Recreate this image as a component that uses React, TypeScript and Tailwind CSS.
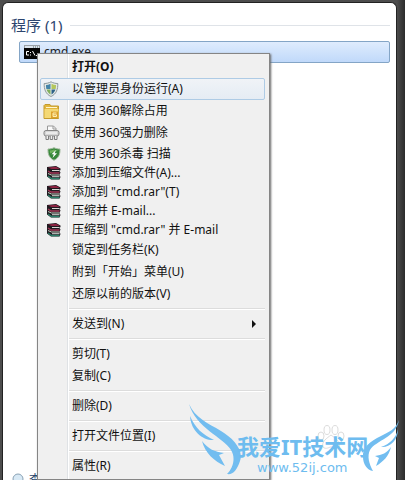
import { Fragment, type ReactNode } from "react";

function UacShield() {
  return (
    <svg width="16" height="16" viewBox="0 0 16 16" aria-hidden="true">
      <path d="M8 .8C6 2 3.500 2.500 1.200 2.500 1 8 2.500 13 8 15.500 13.500 13 15 8 14.800 2.500 12.500 2.500 10 2 8 .8Z" fill="#e4e8e6" stroke="#8b989c" />
      <path d="M7.500 2.800C6 3.600 4.500 4 3 4 2.900 5.500 3 6.700 3.400 8H7.500Z" fill="#4484a8" />
      <path d="M8.500 2.800C10 3.600 11.500 4 13 4 13.100 5.500 13 6.700 12.600 8H8.500Z" fill="#b3c65c" />
      <path d="M3.600 8.600H7.500V13.500C5.500 12.300 4.200 10.700 3.600 8.600Z" fill="#7fae5a" />
      <path d="M12.400 8.600H8.500V13.500C10.500 12.300 11.800 10.700 12.400 8.600Z" fill="#2d6288" />
    </svg>
  );
}

function FolderIcon() {
  return (
    <svg width="17" height="17" viewBox="0 0 17 17" aria-hidden="true">
      <path d="M1 2.500 2 1.500H7L8 3H15.500V15.500H1Z" fill="#e2b63c" stroke="#c39a2c" />
      <path d="M1.500 6H15.500V15H1.500Z" fill="#f4d874" />
      <path d="M3 4.500H14" stroke="#fff6cf" />
      <path d="M8 8.500H15V15H8Z" fill="#dda12c" />
      <path d="M13.500 10H10V13.500H13.500V11.800H10" fill="none" stroke="#fff0b0" />
    </svg>
  );
}

function ShredderIcon() {
  return (
    <svg width="17" height="16" viewBox="0 0 17 16" aria-hidden="true">
      <path d="M4.500 6V1H10.500L13 3.500V6" fill="#fafafa" stroke="#999" />
      <path d="M10 1V4H13" fill="none" stroke="#999" />
      <rect x="1" y="5.500" width="15" height="5.500" rx="2" fill="#d6d6d6" stroke="#858585" />
      <path d="M3 8H14" stroke="#fff" />
      <path d="M3 11V14.500H5.500V11M7.200 11V14.500H9.700V11M11.500 11V14.500H14V11" fill="#eee" stroke="#7d7d7d" />
    </svg>
  );
}

function GreenShield() {
  return (
    <svg width="14" height="14" viewBox="0 0 14 14" aria-hidden="true">
      <path d="M7 .7C5 1.700 3 2 1 2 .8 7 2.200 11 7 13.300 11.800 11 13.200 7 13 2 11 2 9 1.700 7 .7Z" fill="#37873a" stroke="#a0b99c" />
      <path d="M7 2.500C5.500 3.200 4 3.400 2.700 3.400L3 6.500 11 3.500C9.500 3.400 8.200 3 7 2.500Z" fill="#6fb15d" />
      <path d="M9 3 4.500 7.300H6.800L5.500 11 10 6.300H7.600Z" fill="#fff" />
    </svg>
  );
}

function RarIcon() {
  return (
    <svg width="14" height="14" viewBox="0 0 14 14" aria-hidden="true">
      <path d="M0 1 9 0 13.500 2.500V4L12.500 5 13.500 6.500 12.500 9 13.500 11 12.500 13.500H4L0 10.500Z" fill="#1f1a20" />
      <path d="M1 1.500 9 .7 13 3H4.500Z" fill="#8d2342" />
      <path d="M1 5 4 7H12.500" fill="none" stroke="#a33655" strokeWidth="1.400" />
      <path d="M5 4.500H12.500" stroke="#d6d5d2" />
      <path d="M1 7.500 4.500 9H12.500" fill="none" stroke="#c2cfbf" />
      <path d="M1 10 4.500 12.500H12.500" fill="none" stroke="#2a8068" strokeWidth="1.300" />
      <path d="M5 10.700H12.500" stroke="#d6d5d2" />
    </svg>
  );
}

function CmdIcon() {
  return (
    <svg width="16" height="14" viewBox="0 0 16 14" aria-hidden="true">
      <rect width="16" height="14" fill="#9aa0a6" />
      <rect x="1" y="1" width="14" height="2" fill="#dce5ee" />
      <path d="M9 2H10M11 2H12M13 2H14" stroke="#566" />
      <rect y="3" width="16" height="11" fill="#050505" />
      <path d="M5 6.500H2.500V10H5M6.500 7V8M6.500 9.500V10.500M8.500 6 11 10.500M12 10.500H15" fill="none" stroke="#fff" />
    </svg>
  );
}

type Item = { label: string; icon?: ReactNode; bold?: boolean; active?: boolean; compact?: boolean; submenu?: boolean };

const groups: Item[][] = [
  [
    { label: "打开(O)", bold: true },
    { label: "以管理员身份运行(A)", icon: <UacShield />, active: true },
    { label: "使用 360解除占用", icon: <FolderIcon /> },
    { label: "使用 360强力删除", icon: <ShredderIcon /> },
    { label: "使用 360杀毒 扫描", icon: <GreenShield />, compact: true },
    { label: "添加到压缩文件(A)...", icon: <RarIcon />, compact: true },
    { label: '添加到 "cmd.rar"(T)', icon: <RarIcon />, compact: true },
    { label: "压缩并 E-mail...", icon: <RarIcon />, compact: true },
    { label: '压缩到 "cmd.rar" 并 E-mail', icon: <RarIcon />, compact: true },
    { label: "锁定到任务栏(K)" },
    { label: "附到「开始」菜单(U)" },
    { label: "还原以前的版本(V)" },
  ],
  [{ label: "发送到(N)", submenu: true }],
  [{ label: "剪切(T)" }, { label: "复制(C)" }],
  [{ label: "删除(D)" }],
  [{ label: "打开文件位置(I)" }],
  [{ label: "属性(R)" }],
];

function MenuItem({ label, icon, bold, active, compact, submenu }: Item) {
  return (
    <button
      type="button"
      role="menuitem"
      className={`relative flex w-full items-center rounded-xs border text-left ${compact ? "h-[19px]" : "h-[22px]"} ${
        active ? "border-[#aecbe5] bg-linear-to-b from-[#f0f3f7] to-[#e5ecf4]" : "border-transparent"
      } ${bold ? "font-bold" : ""}`}
    >
      <span className={`flex w-[31px] shrink-0 items-center ${compact ? "pl-1.5" : "pl-0.5"}`}>{icon}</span>
      <span className="grow whitespace-nowrap">{label}</span>
      {submenu && (
        <svg width="4" height="8" viewBox="0 0 4 8" className="mr-2" aria-hidden="true">
          <path d="M0 0 4 4 0 8Z" fill="#111" />
        </svg>
      )}
    </button>
  );
}

function ContextMenu() {
  return (
    <div
      role="menu"
      className="absolute top-[53px] left-[37px] w-[233px] border border-[#858585] bg-[#f0f0f0] py-0.5 pr-1 pl-0.5 text-[12px] leading-4 text-[#111] shadow-[1px_1px_2px_#666]"
    >
      <div className="absolute inset-y-0 left-[29px] w-0.5 border-l border-[#dfe2e5] bg-white" />
      {groups.map((group, i) => (
        <Fragment key={i}>
          {i > 0 && (
            <div role="separator" className="ml-7 flex h-2 items-center">
              <div className="h-0.5 w-full border-t border-[#dcdcdc] bg-white" />
            </div>
          )}
          {group.map((item) => (
            <MenuItem key={item.label} {...item} />
          ))}
        </Fragment>
      ))}
    </div>
  );
}

function LeftWing() {
  return (
    <svg width="52" height="72" viewBox="0 0 52 72" className="shrink-0" aria-hidden="true">
      <g fill="#72bdf0">
        <path d="M0 0C6 14 19 19 32 27 44 34 55 46 51 57 48 66 44 71 38 70 44 64 47 54 42 46 34 33 7 24 0 0Z" />
        <path d="M1 12C6 24 14 31 25 36 15 37 2 28 1 12Z" />
        <path d="M13 37C19 45 26 48 35 49L30 51 36 62C25 57 16 49 13 37Z" />
      </g>
    </svg>
  );
}

function RightWing() {
  return (
    <svg width="38" height="52" viewBox="0 0 38 52" className="shrink-0" aria-hidden="true">
      <g fill="#72bdf0">
        <path d="M37 0C34 9 27 12 19 16 8 21 0 28 1 37 1 44 5 50 11 51 7 44 5 36 8 30 14 20 34 18 37 0Z" />
        <path d="M36 9C34 18 28 24 19 27 27 28 36 21 36 9Z" />
        <path d="M29 27C25 33 20 35 13 36L17 38 14 46C21 42 27 36 29 27Z" />
      </g>
    </svg>
  );
}

function Watermark() {
  return (
    <div className="pointer-events-none absolute top-[404px] left-[189px] flex text-[#6ebcef]">
      <LeftWing />
      <div className="-ml-1 pt-[26px] whitespace-nowrap">
        <p className="text-[22px] leading-8 font-bold">我爱IT技术网</p>
        <p className="-mt-0.5 pl-5 font-['DejaVu_Sans'] text-[13px] leading-4 font-medium">www.52ij.com</p>
      </div>
      <div className="-ml-1.5 pt-4">
        <RightWing />
      </div>
    </div>
  );
}

function Paw() {
  return (
    <svg width="28" height="26" viewBox="0 0 28 26" className="absolute top-[424px] left-[317px]" aria-hidden="true">
      <g fill="#fff" stroke="#dcdcdc">
        <ellipse cx="4" cy="12" rx="3" ry="4" />
        <ellipse cx="10" cy="6" rx="3" ry="4.500" />
        <ellipse cx="18" cy="6" rx="3" ry="4.500" />
        <ellipse cx="24" cy="12" rx="3" ry="4" />
        <path d="M14 11C10 14 4 18 6 23 9 26 12 23 14 23 16 23 20 26 22 23 24 18 18 14 14 11Z" />
      </g>
    </svg>
  );
}

export default function App() {
  return (
    <div className="relative h-screen overflow-hidden bg-linear-to-r from-[#4d4d4d] from-98% to-[#2c2c2c] pt-0.5 pr-2 pl-0.5 font-['Noto_Sans','Noto_Sans_CJK_SC',sans-serif]">
      <main className="flex h-full flex-col rounded-t-md border-x border-t border-[#222] bg-white pt-3 pr-1.5 pl-2">
        <h1 className="flex items-center gap-2 text-[15px] leading-5 text-[#2c456f]">
          程序 (1)
          <span className="h-px grow bg-[#dfe3e8]" />
        </h1>
        <button
          type="button"
          className="mt-1.5 ml-2 flex h-[22px] items-center gap-1 rounded-xs border border-[#84a5c6] bg-linear-to-b from-[#dfecfd] to-[#c0d9fa] pl-1 text-[12px] text-[#222]"
        >
          <CmdIcon />
          cmd.exe
        </button>
        <a href="#more" className="mt-auto -mb-2.5 flex items-center gap-1 text-[12px] leading-5 text-[#26466d]">
          <svg width="14" height="14" viewBox="0 0 14 14" aria-hidden="true">
            <circle cx="7" cy="6" r="5" fill="#d8e9f5" stroke="#8aa2b5" />
          </svg>
          查
        </a>
      </main>
      <ContextMenu />
      <Paw />
      <Watermark />
    </div>
  );
}
